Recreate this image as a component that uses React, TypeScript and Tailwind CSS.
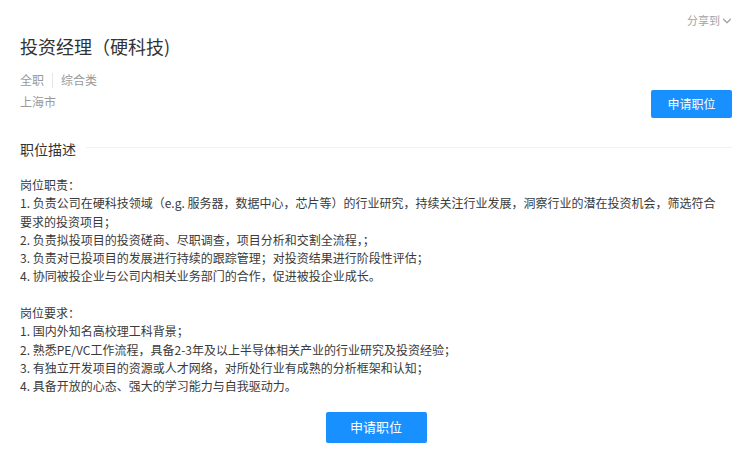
import React from "react";

const font = { fontFamily: '"Noto Sans CJK SC", "Noto Sans", sans-serif' };

function Chevron() {
  return (
    <svg width="10" height="10" viewBox="0 0 10 10" className="ml-[2px]" fill="none">
      <path d="M1.5 3.2 L5 6.7 L8.5 3.2" stroke="#a3a3a3" strokeWidth="1.3" strokeLinecap="round" strokeLinejoin="round" />
    </svg>
  );
}

export default function App() {
  const duties: React.ReactNode[] = [
    "岗位职责：",
    <>
      1. 负责公司在硬科技领域（e.g. 服务器，数据中心，芯片等）的行业研究，持续关注行业发展，洞察行业的潜在投资机会，筛选符合
      <br />
      要求的投资项目；
    </>,
    "2. 负责拟投项目的投资磋商、尽职调查，项目分析和交割全流程，；",
    "3. 负责对已投项目的发展进行持续的跟踪管理；对投资结果进行阶段性评估；",
    "4. 协同被投企业与公司内相关业务部门的合作，促进被投企业成长。",
  ];
  const reqs = [
    "岗位要求：",
    "1. 国内外知名高校理工科背景；",
    "2. 熟悉PE/VC工作流程，具备2-3年及以上半导体相关产业的行业研究及投资经验；",
    "3. 有独立开发项目的资源或人才网络，对所处行业有成熟的分析框架和认知；",
    "4. 具备开放的心态、强大的学习能力与自我驱动力。",
  ];
  return (
    <div className="w-[750px] h-[473px] bg-white pl-[20px] pr-[18px] pt-[12px]" style={font}>
      <div className="flex justify-end items-center text-[11px] leading-[17px] text-[#a3a3a3]">
        <span>分享到</span>
        <Chevron />
      </div>
      <h1 className="mt-[4px] text-[18px] leading-[26px] text-[#333] font-normal">投资经理（硬科技)</h1>
      <div className="mt-[12px] flex items-start justify-between">
        <div className="text-[12px] leading-[18px] text-[#999]">
          <div className="flex items-center">
            <span>全职</span>
            <span className="mx-[8px] w-px h-[15px] bg-[#e6e6e6]" />
            <span>综合类</span>
          </div>
          <div className="mt-[4px]">上海市</div>
        </div>
        <button className="mt-[19px] w-[81px] h-[28px] rounded-[2px] bg-[#1890ff] text-white text-[12px]">申请职位</button>
      </div>
      <div className="mt-[21px] flex items-center">
        <span className="text-[14px] leading-[20px] text-[#333]">职位描述</span>
        <div className="ml-[10px] flex-1 h-px bg-[#f2f2f2] -mt-[3px]" />
      </div>
      <div className="mt-[17px] text-[12px] leading-[18.3px] text-[#3a3a3a]">
        {duties.map((l, i) => (
          <p key={i}>{l}</p>
        ))}
        <p className="h-[18.3px]" />
        {reqs.map((l, i) => (
          <p key={i}>{l}</p>
        ))}
      </div>
      <div className="mt-[16px] flex justify-center">
        <button className="w-[101px] h-[31px] rounded-[2px] bg-[#1890ff] text-white text-[13px]">申请职位</button>
      </div>
    </div>
  );
}
